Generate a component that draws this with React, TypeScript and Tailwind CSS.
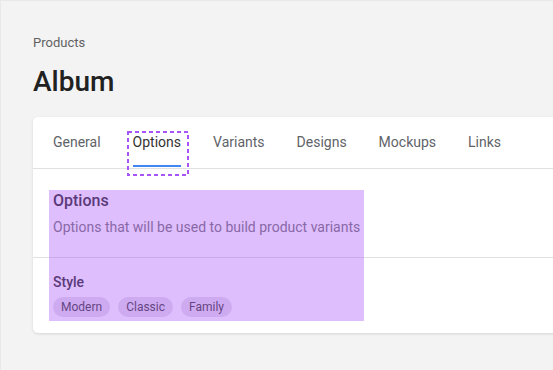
import React from "react";

const tabs = ["General", "Options", "Variants", "Designs", "Mockups", "Links"];

export default function App() {
  return (
    <div
      className="relative w-[553px] h-[370px] overflow-hidden bg-[#f3f3f3] border-t border-l border-[#e8e8e8]"
      style={{ fontFamily: "Roboto, 'Liberation Sans', sans-serif" }}
    >
      <div className="pl-[32px] pt-[33px]">
        <div className="text-[13px] leading-[18px] text-[#616161]">Products</div>
        <h1 className="mt-[13px] text-[28px] leading-[34px] font-medium text-[#212121]">Album</h1>
        <div className="mt-[18px] w-[640px] bg-white rounded-[5px] shadow-[0_1px_3px_rgba(0,0,0,0.12)]">
          <div className="flex px-[4px] border-b border-[#e0e0e0]">
            {tabs.map((t) => (
              <div key={t} className="relative px-4 pt-[15px] pb-[16px]">
                <span
                  className={
                    "block text-[14px] leading-[20px] " +
                    (t === "Options" ? "text-[#333333]" : "text-[#5f6368]")
                  }
                >
                  {t}
                </span>
                {t === "Options" && (
                  <div className="absolute left-4 right-4 bottom-[1px] h-[2px] bg-[#4285f4]" />
                )}
              </div>
            ))}
          </div>
          <div className="pl-[20px] pt-[20px] pb-[20px] border-b border-[#e0e0e0]">
            <div className="text-[16px] leading-[24px] font-medium text-[#2a2a2a]">Options</div>
            <div className="mt-[4px] text-[14px] leading-[20px] text-[#757575]">
              Options that will be used to build product variants
            </div>
          </div>
          <div className="pl-[20px] pt-[14px] pb-[16px]">
            <div className="text-[14px] leading-[20px] font-medium text-[#2a2a2a]">Style</div>
            <div className="mt-[5px] flex gap-2">
              {["Modern", "Classic", "Family"].map((c) => (
                <span
                  key={c}
                  className="h-[20px] px-2 rounded-full bg-[#e6e1ec] text-[12px] leading-[20px] text-[#3a3a3a]"
                >
                  {c}
                </span>
              ))}
            </div>
          </div>
        </div>
      </div>
      <div className="absolute left-[48px] top-[189px] w-[315px] h-[131px] bg-[rgba(168,85,247,0.38)] pointer-events-none" />
      <svg
        className="absolute left-[126px] top-[130px] pointer-events-none"
        width="62"
        height="45"
        viewBox="0 0 62 45"
      >
        <rect
          x="1"
          y="1"
          width="60"
          height="43"
          fill="none"
          stroke="#a855f7"
          strokeWidth="2"
          strokeDasharray="4 3"
        />
      </svg>
    </div>
  );
}
